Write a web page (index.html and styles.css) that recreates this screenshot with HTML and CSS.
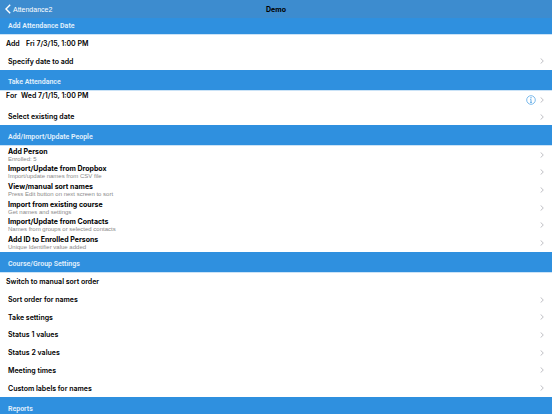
FILE: index.html
```
<!DOCTYPE html>
<html lang="en">
<head>
    <meta charset="UTF-8">
    <meta name="viewport" content="width=device-width, initial-scale=1">
    <title>Demo</title>
    <link rel="stylesheet" href="styles.css">
</head>
<body>
<svg class="sprite" aria-hidden="true">
    <symbol id="chevron" viewBox="0 0 4 6">
        <path d="M.6.4 3.3 3 .6 5.6" fill="none" stroke="currentColor" stroke-width=".9"/>
    </symbol>
</svg>

<header class="navbar">
    <a class="back" href="#">
        <svg class="back-icon" viewBox="0 0 6 10" aria-hidden="true"><path d="M5.2.8 1 5l4.2 4.2" fill="none" stroke="currentColor" stroke-width="1.4"/></svg>
        <span>Attendance2</span>
    </a>
    <h1>Demo</h1>
</header>

<main>
    <section>
        <h2 class="first">Add Attendance Date</h2>
        <ul class="list dates">
            <li><button class="row action" type="button"><span class="verb">Add</span><span>Fri 7/3/15, 1:00 PM</span></button></li>
            <li><a class="row" href="#"><span>Specify date to add</span><svg class="chevron"><use href="#chevron"/></svg></a></li>
        </ul>
    </section>

    <section>
        <h2>Take Attendance</h2>
        <ul class="list take">
            <li class="current">
                <button class="row action" type="button"><span class="verb">For</span><span>Wed 7/1/15, 1:00 PM</span></button>
                <button class="info" type="button" aria-label="Details">
                    <svg viewBox="0 0 10 10"><circle cx="5" cy="5" r="4.3" fill="none" stroke="currentColor" stroke-width=".8"/><circle cx="5" cy="2.8" r=".7" fill="currentColor"/><path d="M4.2 4.4H5v3M4 7.4h2" fill="none" stroke="currentColor" stroke-width=".9"/></svg>
                </button>
                <svg class="chevron"><use href="#chevron"/></svg>
            </li>
            <li><a class="row" href="#"><span>Select existing date</span><svg class="chevron"><use href="#chevron"/></svg></a></li>
        </ul>
    </section>

    <section>
        <h2>Add/Import/Update People</h2>
        <ul class="list people">
            <li><a class="row" href="#"><span>Add Person<small>Enrolled: 5</small></span><svg class="chevron"><use href="#chevron"/></svg></a></li>
            <li><a class="row" href="#"><span>Import/Update from Dropbox<small>Import/update names from CSV file</small></span><svg class="chevron"><use href="#chevron"/></svg></a></li>
            <li><a class="row" href="#"><span>View/manual sort names<small>Press Edit button on next screen to sort</small></span><svg class="chevron"><use href="#chevron"/></svg></a></li>
            <li><a class="row" href="#"><span>Import from existing course<small>Get names and settings</small></span><svg class="chevron"><use href="#chevron"/></svg></a></li>
            <li><a class="row" href="#"><span>Import/Update from Contacts<small>Names from groups or selected contacts</small></span><svg class="chevron"><use href="#chevron"/></svg></a></li>
            <li><a class="row" href="#"><span>Add ID to Enrolled Persons<small>Unique Identifier value added</small></span><svg class="chevron"><use href="#chevron"/></svg></a></li>
        </ul>
    </section>

    <section>
        <h2>Course/Group Settings</h2>
        <ul class="list settings">
            <li><button class="row action" type="button">Switch to manual sort order</button></li>
            <li><a class="row" href="#"><span>Sort order for names</span><svg class="chevron"><use href="#chevron"/></svg></a></li>
            <li><a class="row" href="#"><span>Take settings</span><svg class="chevron"><use href="#chevron"/></svg></a></li>
            <li><a class="row" href="#"><span>Status 1 values</span><svg class="chevron"><use href="#chevron"/></svg></a></li>
            <li><a class="row" href="#"><span>Status 2 values</span><svg class="chevron"><use href="#chevron"/></svg></a></li>
            <li><a class="row" href="#"><span>Meeting times</span><svg class="chevron"><use href="#chevron"/></svg></a></li>
            <li><a class="row" href="#"><span>Custom labels for names</span><svg class="chevron"><use href="#chevron"/></svg></a></li>
        </ul>
    </section>

    <section>
        <h2 class="last">Reports</h2>
    </section>
</main>
</body>
</html>
```
FILE: styles.css
```
:root {
    --bar: #3d8ccf;
    --blue: #2f90df;
    --fg: #000000;
    --muted: #8a8a8a;
    --chevron: #b8b8bd;
}
* { box-sizing: border-box; }
body {
    margin: 0;
    font: 600 7px/9px Inter, "Liberation Sans", sans-serif;
    background: #ffffff;
    color: var(--fg);
}
.sprite { position: absolute; width: 0; height: 0; }
.navbar {
    display: grid;
    grid-template-columns: 1fr auto 1fr;
    align-items: center;
    height: 18px;
    padding: 0 5px;
    background: var(--bar);
}
.back {
    display: flex;
    align-items: center;
    gap: 2px;
    color: #ffffff;
    font-family: "Liberation Sans", sans-serif;
    font-weight: 400;
    text-decoration: none;
}
.back-icon { width: 6px; height: 10px; }
h1 {
    margin: 0;
    font-size: 7px;
    font-weight: 700;
}
h2 {
    margin: 0;
    padding: 8px 8px 3px;
    font-family: Roboto, "Liberation Sans", sans-serif;
    font-size: 7px;
    font-weight: 600;
    color: #e3f1fc;
    background: var(--blue);
}
h2.first { padding: 4px 8px 3px; }
h2.last { padding-bottom: 0; }
.list {
    display: grid;
    grid-auto-rows: 1fr;
    margin: 0;
    padding: 0;
    list-style: none;
    border-top: 1px solid #cbe3f7;
}
.list li { display: flex; }
.dates { min-height: 36px; }
.take { min-height: 35px; }
.people { min-height: 107px; }
.settings { min-height: 125px; }
.row {
    display: flex;
    flex: 1;
    align-items: center;
    justify-content: space-between;
    padding: 0 8px;
    border: 0;
    background: none;
    color: inherit;
    font: inherit;
    text-align: left;
    text-decoration: none;
}
.action {
    justify-content: flex-start;
    padding-left: 6px;
}
.verb { min-width: 20px; }
.current {
    align-items: center;
    padding-right: 8px;
}
.current .row { align-self: flex-start; }
.current .verb { min-width: 15px; }
.info {
    width: 10px;
    height: 10px;
    margin-right: 4px;
    padding: 0;
    border: 0;
    background: none;
    color: #5ba8e6;
}
.info svg { display: block; }
.chevron {
    width: 4px;
    height: 6px;
    color: var(--chevron);
}
.people .row { font-weight: 700; }
small {
    display: block;
    font-family: "Liberation Sans", sans-serif;
    font-size: 6px;
    font-weight: 400;
    line-height: 7px;
    color: var(--muted);
}
```
